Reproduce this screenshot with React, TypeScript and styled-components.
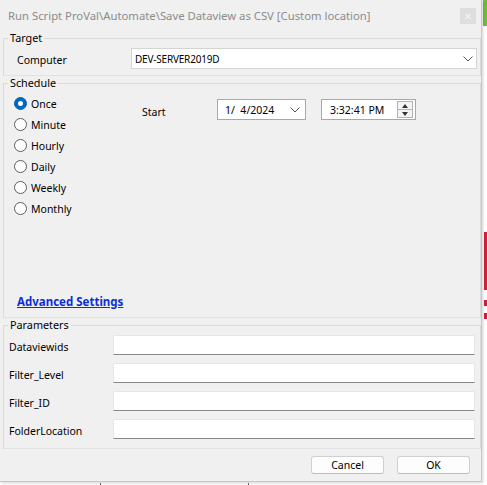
import React from "react";
import styled, { createGlobalStyle } from "styled-components";

const Global = createGlobalStyle`
  html, body { margin: 0; padding: 0; background: #ffffff; }
  body { font-family: "Noto Sans", "DejaVu Sans", sans-serif; font-size: 10.5px; color: #000; }
  * { box-sizing: border-box; }
`;

const Page = styled.div`
  position: relative;
  width: 487px;
  height: 485px;
  overflow: hidden;
  background: #ffffff;
`;

const Backdrop = styled.div<{ $x: number; $y: number; $w: number; $h: number; $c: string }>`
  position: absolute;
  left: ${(p) => p.$x}px;
  top: ${(p) => p.$y}px;
  width: ${(p) => p.$w}px;
  height: ${(p) => p.$h}px;
  background: ${(p) => p.$c};
`;

const Dialog = styled.div`
  position: relative;
  width: 482px;
  height: 482px;
  background: #f0f0f0;
  border-right: 1px solid #c8c8c8;
  border-bottom: 1px solid #c8c8c8;
  box-shadow: 1px 1px 3px rgba(0, 0, 0, 0.18);
  display: flex;
  flex-direction: column;
`;

const TitleBar = styled.div`
  height: 31px;
  display: flex;
  align-items: center;
  justify-content: space-between;
  padding: 0 5px 0 8px;
`;

const Title = styled.div`
  font-size: 11.3px;
  color: #8c8c8c;
  white-space: nowrap;
`;

const CloseBtn = styled.div`
  width: 16px;
  height: 16px;
  background: #dedede;
  color: #f4f4f4;
  font-size: 10px;
  line-height: 16px;
  text-align: center;
`;

const Group = styled.fieldset<{ $h: number }>`
  margin: 0 0 0 3px;
  padding: 0;
  height: ${(p) => p.$h}px;
  border: 1px solid #dadada;
  border-bottom-color: #e2e2e2;
  min-width: 0;
`;

const Legend = styled.legend`
  padding: 0 2px;
  margin-left: 4px;
  font-size: 10.8px;
  line-height: 14px;
  color: #000;
`;

const TargetRow = styled.div`
  display: flex;
  align-items: center;
  padding: 3px 3px 0 13px;
`;

const FieldLabel = styled.div<{ $w: number }>`
  width: ${(p) => p.$w}px;
  flex: none;
  padding-top: 3px;
  font-size: 10.5px;
`;

const SelectBox = styled.div`
  flex: 1;
  height: 21px;
  background: #ffffff;
  border: 1px solid #d4d4d4;
  display: flex;
  align-items: center;
  justify-content: space-between;
  padding: 0 3px 0 3px;
  font-size: 10px;
  letter-spacing: -0.2px;
`;

const ScheduleBody = styled.div`
  height: 226px;
  display: flex;
  flex-direction: column;
  justify-content: space-between;
  padding: 3px 0 7px 10px;
`;

const ScheduleTop = styled.div`
  display: flex;
  align-items: flex-start;
`;

const RadioList = styled.div`
  width: 128px;
  display: flex;
  flex-direction: column;
`;

const RadioItem = styled.label`
  height: 21px;
  display: flex;
  align-items: center;
  gap: 4px;
  font-size: 10.5px;
`;

const RadioCircle = styled.span<{ $on?: boolean }>`
  width: 13px;
  height: 13px;
  border-radius: 50%;
  flex: none;
  background: ${(p) => (p.$on ? "#0067c0" : "#ffffff")};
  border: 1px solid ${(p) => (p.$on ? "#0067c0" : "#5c5c5c")};
  display: flex;
  align-items: center;
  justify-content: center;
  &::after {
    content: "";
    display: ${(p) => (p.$on ? "block" : "none")};
    width: 5px;
    height: 5px;
    border-radius: 50%;
    background: #ffffff;
  }
`;

const StartRow = styled.div`
  display: flex;
  align-items: center;
  padding-top: 6px;
`;

const StartLabel = styled.div`
  width: 75px;
  padding-top: 5px;
  font-size: 10.5px;
`;

const DateBox = styled.div`
  width: 89px;
  height: 21px;
  background: #ffffff;
  border: 1px solid #a8a8a8;
  display: flex;
  align-items: center;
  justify-content: space-between;
  padding: 0 5px 0 7px;
  font-size: 10.5px;
  margin-right: 15px;
`;

const TimeBox = styled.div`
  width: 95px;
  height: 21px;
  background: #ffffff;
  border: 1px solid #a8a8a8;
  display: flex;
  align-items: center;
  justify-content: space-between;
  padding: 0 2px 0 8px;
  font-size: 10.5px;
`;

const Spinner = styled.div`
  width: 16px;
  height: 17px;
  border: 1px solid #b4b4b4;
  background: #f4f4f4;
  display: flex;
  flex-direction: column;
`;

const SpinHalf = styled.div<{ $down?: boolean }>`
  flex: 1;
  display: flex;
  align-items: center;
  justify-content: center;
  border-top: ${(p) => (p.$down ? "1px solid #b4b4b4" : "none")};
  &::after {
    content: "";
    width: 0;
    height: 0;
    border-left: 3.5px solid transparent;
    border-right: 3.5px solid transparent;
    ${(p) => (p.$down ? "border-top: 4px solid #333;" : "border-bottom: 4px solid #333;")}
  }
`;

const Link = styled.a`
  margin-left: 3px;
  color: #0a2fd8;
  font-weight: 700;
  font-size: 11.5px;
  text-decoration: underline;
  cursor: pointer;
`;

const ParamBody = styled.div`
  display: flex;
  flex-direction: column;
  gap: 8px;
  padding: 3px 5px 0 5px;
`;

const ParamRow = styled.div`
  display: flex;
  align-items: center;
`;

const TextInput = styled.div`
  flex: 1;
  height: 20px;
  background: #ffffff;
  border: 1px solid #e6e6e6;
  border-bottom: 1px solid #868686;
  border-radius: 2px 2px 0 0;
`;

const ButtonBar = styled.div`
  display: flex;
  justify-content: flex-end;
  gap: 13px;
  padding: 7px 11px 0 0;
`;

const Button = styled.div`
  width: 73px;
  height: 18px;
  background: #fdfdfd;
  border: 1px solid #d0d0d0;
  border-bottom-color: #bcbcbc;
  border-radius: 3px;
  display: flex;
  align-items: center;
  justify-content: center;
  font-size: 10.5px;
`;

const Chevron = () => (
  <svg width="10" height="6" viewBox="0 0 10 6">
    <path d="M0.5 0.5 L5 5 L9.5 0.5" fill="none" stroke="#555" strokeWidth="1" />
  </svg>
);

const radios = ["Once", "Minute", "Hourly", "Daily", "Weekly", "Monthly"];
const params = ["Dataviewids", "Filter_Level", "Filter_ID", "FolderLocation"];

export default function App() {
  return (
    <>
      <Global />
      <Page>
        <Backdrop $x={483} $y={0} $w={4} $h={26} $c="#6cbf3a" />
        <Backdrop $x={484} $y={232} $w={3} $h={58} $c="#d01f3c" />
        <Backdrop $x={484} $y={300} $w={3} $h={6} $c="#d01f3c" />
        <Backdrop $x={484} $y={313} $w={3} $h={6} $c="#d01f3c" />
        <Backdrop $x={100} $y={483} $w={1} $h={2} $c="#666" />
        <Backdrop $x={248} $y={483} $w={1} $h={2} $c="#666" />
        <Dialog>
          <TitleBar>
            <Title>Run Script ProVal\Automate\Save Dataview as CSV [Custom location]</Title>
            <CloseBtn>✕</CloseBtn>
          </TitleBar>
          <Group $h={45}>
            <Legend>Target</Legend>
            <TargetRow>
              <FieldLabel $w={114}>Computer</FieldLabel>
              <SelectBox>
                <span>DEV-SERVER2019D</span>
                <Chevron />
              </SelectBox>
            </TargetRow>
          </Group>
          <Group $h={242}>
            <Legend>Schedule</Legend>
            <ScheduleBody>
              <ScheduleTop>
                <RadioList>
                  {radios.map((r, i) => (
                    <RadioItem key={r}>
                      <RadioCircle $on={i === 0} />
                      {r}
                    </RadioItem>
                  ))}
                </RadioList>
                <StartRow>
                  <StartLabel>Start</StartLabel>
                  <DateBox>
                    <span>1/&nbsp; 4/2024</span>
                    <Chevron />
                  </DateBox>
                  <TimeBox>
                    <span>3:32:41 PM</span>
                    <Spinner>
                      <SpinHalf />
                      <SpinHalf $down />
                    </Spinner>
                  </TimeBox>
                </StartRow>
              </ScheduleTop>
              <div>
                <Link>Advanced Settings</Link>
              </div>
            </ScheduleBody>
          </Group>
          <Group $h={131}>
            <Legend>Parameters</Legend>
            <ParamBody>
              {params.map((p) => (
                <ParamRow key={p}>
                  <FieldLabel $w={104}>{p}</FieldLabel>
                  <TextInput />
                </ParamRow>
              ))}
            </ParamBody>
          </Group>
          <ButtonBar>
            <Button>Cancel</Button>
            <Button>OK</Button>
          </ButtonBar>
        </Dialog>
      </Page>
    </>
  );
}
